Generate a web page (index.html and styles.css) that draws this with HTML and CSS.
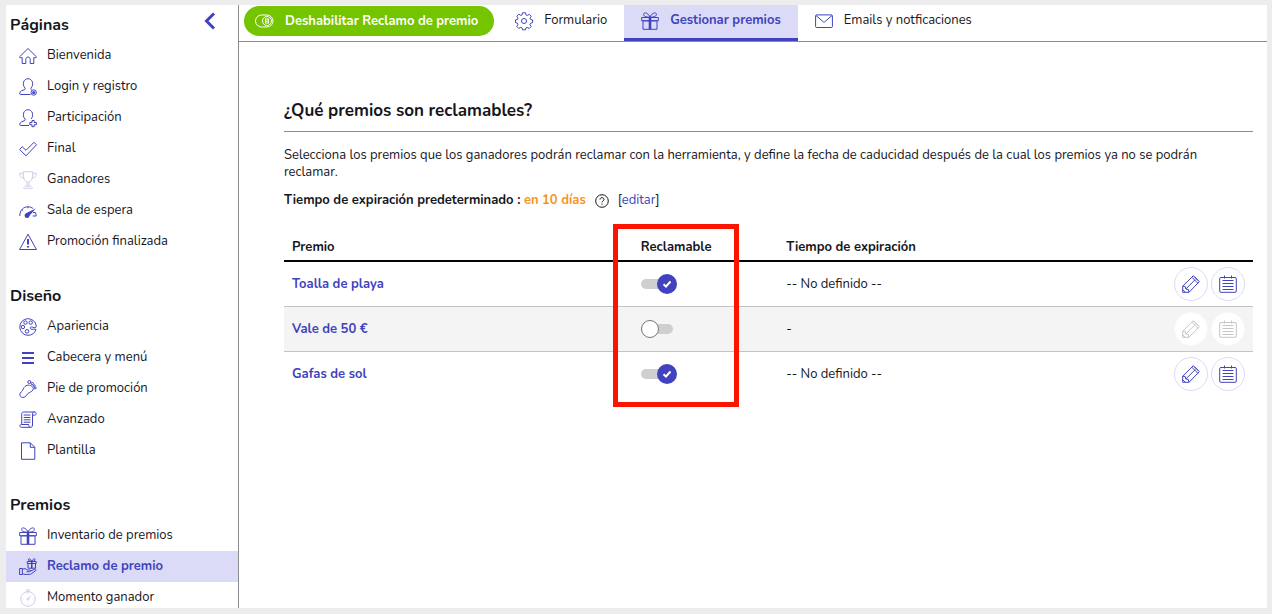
FILE: index.html
```html
<!DOCTYPE html>
<html lang="es">
<head>
<meta charset="utf-8">
<meta name="viewport" content="width=device-width, initial-scale=1">
<title>Gestionar premios</title>
<link rel="stylesheet" href="styles.css">
</head>
<body>
<svg class="sprite" aria-hidden="true">
  <symbol id="gift" viewBox="0 0 18 18">
    <path d="M.7 5.5h16.6v3.3H.7zM2 8.8h14v8.5H2z"/><path d="M7.7 5.5h2.6v11.8H7.7z" class="fill"/><path d="M9 5.2C7.500 1 2.500-.6 2.600 2.500 2.700 4.800 6.500 5.200 9 5.200zM9 5.200C10.500 1 15.500-.6 15.400 2.500 15.300 4.800 11.500 5.200 9 5.200z"/>
  </symbol>
  <symbol id="pencil" viewBox="0 0 18 18">
    <path d="M.7 17.300V11.200L11.300.700 17.300 6.700 7 17.300zM.7 11.200l2.500.3.600 2.500 2.500.500.700 2.800M3.800 14 13.200 4.600M9.800 2.200l6 6M12.200 1.600l4.200 4.200M.9 14.800l2.300 2.300"/>
  </symbol>
  <symbol id="calendar" viewBox="0 0 18 18">
    <path d="M2 2.500h14a1.300 1.300 0 0 1 1.300 1.300V16a1.300 1.300 0 0 1-1.300 1.300H2A1.300 1.300 0 0 1 .7 16V3.800A1.300 1.300 0 0 1 2 2.500zM5.500.500v3M12.500.500v3M3.500 5.500h11M3.500 8.500h11M3.500 11.500h11M3.500 14.500h11"/>
  </symbol>
</svg>
<div class="app">
  <nav class="sidebar" aria-label="Secciones">
    <section class="group">
      <div class="group-head">
        <h2 class="group-title">Páginas</h2>
        <button class="collapse" type="button" aria-label="Contraer menú"><svg viewBox="0 0 12 18"><path d="M10 1.500 2.500 9l7.500 7.500"/></svg></button>
      </div>
      <ul class="menu">
        <li><a class="item" href="#"><svg class="icon" viewBox="0 0 18 18"><path d="M9 1.500.600 9.800c-.3.500.2 1 .8.900h1.800v5.800h3.600v-4.200c0-3 4.400-3 4.400 0v4.200h3.600v-5.800h1.800c.6.1 1.100-.4.800-.9z"/></svg>Bienvenida</a></li>
        <li><a class="item" href="#"><svg class="icon" viewBox="0 0 18 18"><path d="M11.500 16.500H1.800C-.4 16.500.800 13 4 12.200c2-.5 2.600-1 2-2.200C2.800 6.500 4.500.7 9 .7s6.200 5.800 3 9.300c-.4.900-.2 1.400.6 1.700"/><circle cx="14.700" cy="14.500" r="2.700"/><circle cx="14.700" cy="14.500" r="1.600" class="fill"/></svg>Login y registro</a></li>
        <li><a class="item" href="#"><svg class="icon" viewBox="0 0 18 18"><path d="M10 16.500H1.800C-.4 16.500.800 13 4 12.200c2-.5 2.600-1 2-2.200C2.800 6.500 4.500.7 9 .7s6.200 5.800 3 9.300"/><path d="M13 11.500h2.200v2h2.200v2.200h-2.200v2H13v-2h-2.200v-2.200H13z"/></svg>Participación</a></li>
        <li><a class="item" href="#"><svg class="icon" viewBox="0 0 18 18"><path d="M.600 9.500 3.200 6.700 7 10.300 15 2.300 17.500 4.800 7 15.800z"/></svg>Final</a></li>
        <li><a class="item" href="#"><svg class="icon soft" viewBox="0 0 18 18"><path d="M4.300.8h9.400C14 7 12.500 10.800 9 11.200 5.500 10.800 4 7 4.300.8zM4.300 2.200H.8C.6 5.500 2 6.800 5 7.200M13.700 2.200h3.500c.2 3.300-1.200 4.600-4.200 5M8 11.200v4M10 11.200v4M5.500 15.200h7M4 17.300h10"/></svg>Ganadores</a></li>
        <li><a class="item" href="#"><svg class="icon" viewBox="0 0 18 18"><path d="M.8 14C.8 8 4.500 4.800 9 4.800c2 0 3.800.7 5.200 1.800M3 7.800l1.200.8M9 4.800v1.500M14 10.500h2.300c.6 1 .9 2.200.9 3.500h-3.500"/><path d="M16.800 6.500 11.500 12.500 10.500 14A2.500 2.500 0 1 1 7.500 11z" class="fill"/></svg>Sala de espera</a></li>
        <li><a class="item" href="#"><svg class="icon" viewBox="0 0 18 18"><path d="M9 1.200 17.400 16.500H.6z"/><path d="M9 6v5.500M9 13v1.500" class="thick"/></svg>Promoción finalizada</a></li>
      </ul>
    </section>
    <section class="group">
      <div class="group-head"><h2 class="group-title">Diseño</h2></div>
      <ul class="menu">
        <li><a class="item" href="#"><svg class="icon" viewBox="0 0 18 18"><path d="M17 11.500C16 15 13 17.300 9 17.300A8.300 8.300 0 1 1 17.300 8c0 2-2 2.300-3.500 1.200-2-1-3.500.8-1.800 1.900 1.200.8 3.200-.6 5 .4z"/><circle cx="6.500" cy="4.600" r="1.700"/><circle cx="11.700" cy="4.600" r="1.700"/><circle cx="3.900" cy="9" r="1.700"/><circle cx="8" cy="13.300" r="1.800"/></svg>Apariencia</a></li>
        <li><a class="item" href="#"><svg class="icon" viewBox="0 0 18 18"><path d="M3 4h12M3 9h12M3 14h12" class="bar"/></svg>Cabecera y menú</a></li>
        <li><a class="item" href="#"><svg class="icon" viewBox="0 0 18 18"><path d="M6 6.500c2.500-2.300 6.500-1.500 8 1 1 2-.5 3.500-2.500 4.500-2 1.100-3 1.500-4 3.300-1.500 2.800-5.500 2.700-6.500.2C.3 13.500 2 12.200 3.200 11 4.500 9.500 4.200 8 6 6.500z"/><circle cx="10.300" cy="2" r="1.500"/><circle cx="13.300" cy="3.600" r="1.100"/><circle cx="15.200" cy="5.700" r="1"/><circle cx="16.300" cy="8" r=".9"/></svg>Pie de promoción</a></li>
        <li><a class="item" href="#"><svg class="icon" viewBox="0 0 18 18"><path d="M2.700 13.500V3.200c0-1.300.7-2.200 1.900-2.200h10.900c2.200 0 2.200 3.200 0 3.200h-2V14c0 1.500-.7 2.300-2 2.300H2.400c-2 0-2-2.800 0-2.800h7.300c0 1.800.5 2.800 1.800 2.800M13.500 4.200V2.800c0-1 .7-1.800 2-1.800M4.700 4h6.800M4.700 6.500h6.800M4.700 8.800h6.800M4.700 11.200h6.800"/></svg>Avanzado</a></li>
        <li><a class="item" href="#"><svg class="icon" viewBox="0 0 18 18"><path d="M2.500.8h8.800l4.500 4.500v12H2.500zM11.300.8v4.500h4.500"/></svg>Plantilla</a></li>
      </ul>
    </section>
    <section class="group">
      <div class="group-head"><h2 class="group-title">Premios</h2></div>
      <ul class="menu">
        <li><a class="item" href="#"><svg class="icon"><use href="#gift"/></svg>Inventario de premios</a></li>
        <li><a class="item current" href="#" aria-current="page"><svg class="icon" viewBox="0 0 18 18"><path d="M.6 10.500h2.800v6H.6zM3.400 11.200c2-1 3.500-.5 4.800.8h2.600c1.200 0 1.200 1.700 0 1.700H7.500M11.500 13l4-1.700c1.600-.5 2 .8 1 1.500l-4.200 3c-.7.500-1.200.6-2 .6H6c-1 0-1.600-.5-2.600-.5M8.200 3.500h9v2h-9zM9 5.500h7.500v4.700H9zM12.700 3.300C11-.2 8.500.4 9.700 2.500c.6.700 1.800.9 3 .8zM12.700 3.300C14.400-.2 16.900.4 15.700 2.500c-.6.700-1.800.9-3 .8z"/><path d="M12 3.500h1.500v6.700H12z" class="fill"/></svg>Reclamo de premio</a></li>
        <li><a class="item" href="#"><svg class="icon soft" viewBox="0 0 18 18"><circle cx="9" cy="10" r="7.300"/><path d="M7.800.7h2.400v2H7.800zM9 4.500v.8M9 14.700v.8M3.500 10h.8M13.700 10h.8M9.800 9.300 12 6.500"/><circle cx="9" cy="10" r="1.100"/></svg>Momento ganador</a></li>
      </ul>
    </section>
  </nav>
  <div class="content">
    <header class="toolbar">
      <button class="pill" type="button"><svg class="icon" viewBox="0 0 18 18"><rect x=".5" y="3" width="17.500" height="12" rx="6"/><circle cx="12" cy="9" r="4.500"/><path d="M10.500 6.500v5M12 6v6M13.500 6.500v5"/></svg>Deshabilitar Reclamo de premio</button>
      <nav class="tabs" aria-label="Reclamo de premio">
        <a class="tab" href="#"><svg class="icon" viewBox="0 0 18 18"><path d="M7.500.8h3l.5 2.100 1.300.6 1.900-1.200 2 2-1.100 1.900.6 1.300 1.900.5v2.600l-2 .6-.6 1.400 1.100 1.900-2 2-1.900-1.100-1.300.6-.4 1.800h-3L7 15.900l-1.300-.6-1.900 1.100-2-2 1.100-1.900-.6-1.400L.5 10.500V7.900l1.900-.4.6-1.400-1.100-1.900 2-2 1.900 1.200L7 2.900z"/><circle cx="9" cy="9" r="2.500"/></svg>Formulario</a>
        <a class="tab active" href="#" aria-current="page"><svg class="icon"><use href="#gift"/></svg>Gestionar premios</a>
        <a class="tab" href="#"><svg class="icon" viewBox="0 0 18 18"><rect x=".6" y="2.900" width="16.800" height="12.600" rx="1"/><path d="M1 3.500 8.500 10h1L17 3.500"/></svg>Emails y notficaciones</a>
      </nav>
    </header>
    <main class="main">
      <h1 class="title">¿Qué premios son reclamables?</h1>
      <p class="intro">Selecciona los premios que los ganadores podrán reclamar con la herramienta, y define la fecha de caducidad después de la cual los premios ya no se podrán reclamar.</p>
      <div class="expiry">
        <strong>Tiempo de expiración predeterminado : <span class="days">en 10 días</span></strong>
        <button class="help" type="button" aria-label="Ayuda"><svg viewBox="0 0 14 14"><circle cx="7" cy="7" r="6.300"/><path d="M5 5.600c0-2.700 4-2.500 4-.2 0 1.500-2 1.500-2 3M7 9.700v1.100"/></svg></button>
        <span>[<a class="edit" href="#">editar</a>]</span>
      </div>
      <div class="table-wrap">
        <table class="prizes">
          <thead>
            <tr><th class="col-name" scope="col">Premio</th><th class="col-claim" scope="col">Reclamable</th><th scope="col">Tiempo de expiración</th><td class="col-actions"></td></tr>
          </thead>
          <tbody>
            <tr>
              <td class="text"><a class="prize" href="#">Toalla de playa</a></td>
              <td><label class="switch"><input type="checkbox" checked aria-label="Toalla de playa reclamable"><svg viewBox="0 0 10 10"><path d="M1.500 5.200 4 7.500l4.500-5"/></svg></label></td>
              <td class="text">-- No definido --</td>
              <td><div class="actions"><button class="round" type="button" aria-label="Editar"><svg class="icon"><use href="#pencil"/></svg></button><button class="round" type="button" aria-label="Expiración"><svg class="icon"><use href="#calendar"/></svg></button></div></td>
            </tr>
            <tr class="alt">
              <td class="text"><a class="prize" href="#">Vale de 50 €</a></td>
              <td><label class="switch"><input type="checkbox" aria-label="Vale de 50 € reclamable"></label></td>
              <td class="text">-</td>
              <td><div class="actions"><button class="round" type="button" disabled aria-label="Editar"><svg class="icon"><use href="#pencil"/></svg></button><button class="round" type="button" disabled aria-label="Expiración"><svg class="icon"><use href="#calendar"/></svg></button></div></td>
            </tr>
            <tr>
              <td class="text"><a class="prize" href="#">Gafas de sol</a></td>
              <td><label class="switch"><input type="checkbox" checked aria-label="Gafas de sol reclamable"><svg viewBox="0 0 10 10"><path d="M1.500 5.200 4 7.500l4.500-5"/></svg></label></td>
              <td class="text">-- No definido --</td>
              <td><div class="actions"><button class="round" type="button" aria-label="Editar"><svg class="icon"><use href="#pencil"/></svg></button><button class="round" type="button" aria-label="Expiración"><svg class="icon"><use href="#calendar"/></svg></button></div></td>
            </tr>
          </tbody>
        </table>
        <div class="highlight"></div>
      </div>
    </main>
  </div>
</div>
</body>
</html>
```
FILE: styles.css
```css
:root {
  --accent: #4043bd;
  --accent-soft: #dcdbf7;
  --line: #8b8b90;
}
*, *::before, *::after { box-sizing: border-box; }
body {
  margin: 0;
  height: 100vh;
  padding: 5px 5px 6px 6px;
  background: #ededed;
  color: #16161d;
  font: 13px/17px Nunito, Lato, sans-serif;
}
a { color: inherit; text-decoration: none; }
button { font: inherit; border: 0; cursor: pointer; }
svg { fill: none; stroke: currentColor; stroke-width: 1; }
.fill { fill: currentColor; stroke: none; }
.thick { stroke-width: 2; }
.bar { stroke-width: 2; }
.sprite { position: absolute; width: 0; height: 0; }
.icon { width: 18px; height: 18px; flex: none; color: var(--accent); overflow: visible; }
.soft { color: #cfcde9; }

.app { display: flex; height: 100%; background: #fff; overflow: hidden; }
.sidebar {
  display: flex;
  flex-direction: column;
  gap: 19px;
  flex: none;
  width: 233px;
  border-right: 1px solid var(--line);
}
.group-head {
  display: flex;
  align-items: center;
  justify-content: space-between;
  height: 35px;
  padding: 4px 22px 0 4px;
}
.group-title { margin: 0; font-size: 16px; line-height: 22px; font-weight: 700; }
.collapse { display: flex; padding: 0 0 8px; background: none; color: var(--accent); }
.collapse svg { width: 12px; height: 18px; stroke-width: 3; }
.menu { margin: 0; padding: 0; list-style: none; }
.item {
  display: flex;
  align-items: center;
  gap: 10px;
  height: 31px;
  padding: 0 13px;
}
.current { background: var(--accent-soft); color: var(--accent); font-weight: 700; }

.content { flex: 1; min-width: 0; }
.toolbar {
  display: flex;
  height: 37px;
  padding-left: 5px;
  border-bottom: 1px solid var(--line);
}
.pill {
  display: flex;
  align-items: center;
  gap: 12px;
  height: 30px;
  margin: 1px 4px 0 0;
  padding: 0 16px 0 11px;
  border-radius: 15px;
  background: #74c400;
  color: #fff;
  font-weight: 700;
}
.pill .icon { color: inherit; }
.tabs { display: flex; }
.tab {
  display: flex;
  align-items: center;
  gap: 11px;
  padding: 0 17px 2px;
  border-bottom: 3px solid transparent;
}
.active { background: var(--accent-soft); border-color: var(--accent); color: var(--accent); font-weight: 700; }

.main { padding: 57px 14px 0 45px; }
.title {
  margin: 0 0 15px;
  padding-bottom: 8px;
  border-bottom: 1px solid var(--line);
  font-size: 17px;
  line-height: 24px;
  font-weight: 700;
}
.intro { margin: 0 0 11px; padding-right: 16px; }
.expiry { display: flex; align-items: center; gap: 9px; margin-bottom: 23px; }
.days { color: #f7941d; }
.help { display: flex; padding: 0; background: none; color: inherit; }
.help svg { width: 14px; height: 14px; }
.edit { color: var(--accent); }

.table-wrap { position: relative; }
.prizes { width: 100%; border-collapse: collapse; table-layout: fixed; }
.prizes th, .prizes td { padding: 0 8px; text-align: left; }
.prizes th, .prizes .text { padding-top: 2px; }
.prizes thead tr { height: 29px; border-bottom: 2px solid #050505; }
.prizes tbody tr { height: 45px; border-bottom: 1px solid #c4c4c8; }
.prizes tbody tr:last-child { border-bottom: 0; }
.col-name { width: 36%; }
.col-claim { width: 15%; }
.col-actions { width: 100px; }
.alt { background: #f4f4f4; }
.prize { color: var(--accent); font-weight: 700; }
.actions { display: flex; justify-content: flex-end; gap: 3px; }
.round {
  display: flex;
  align-items: center;
  justify-content: center;
  width: 34px;
  height: 34px;
  padding: 0;
  border: 1px solid #dcdaf8;
  border-radius: 50%;
  background: #fff;
}
.round:disabled { border-color: #f9f9f9; }
.round:disabled .icon { color: #c6c6c6; }

.switch { position: relative; display: flex; width: 36px; height: 20px; }
.switch input {
  appearance: none;
  display: flex;
  align-items: center;
  width: 100%;
  height: 100%;
  margin: 0;
  cursor: pointer;
}
.switch input::before {
  content: "";
  flex: none;
  width: 32px;
  height: 10px;
  border-radius: 5px;
  background: #cfcfd1;
}
.switch input::after {
  content: "";
  flex: none;
  width: 18px;
  height: 18px;
  margin-left: -32px;
  border: 1px solid #777;
  border-radius: 50%;
  background: #fff;
}
.switch input:checked::after {
  width: 20px;
  height: 20px;
  margin-left: -16px;
  border: 0;
  background: var(--accent);
}
.switch svg {
  position: absolute;
  top: 5px;
  right: 5px;
  width: 10px;
  height: 10px;
  color: #fff;
  stroke-width: 2;
  pointer-events: none;
}
.highlight {
  position: absolute;
  top: -8px;
  bottom: -11px;
  left: 34%;
  width: 13%;
  border: 5px solid #fb1500;
  pointer-events: none;
}
```
